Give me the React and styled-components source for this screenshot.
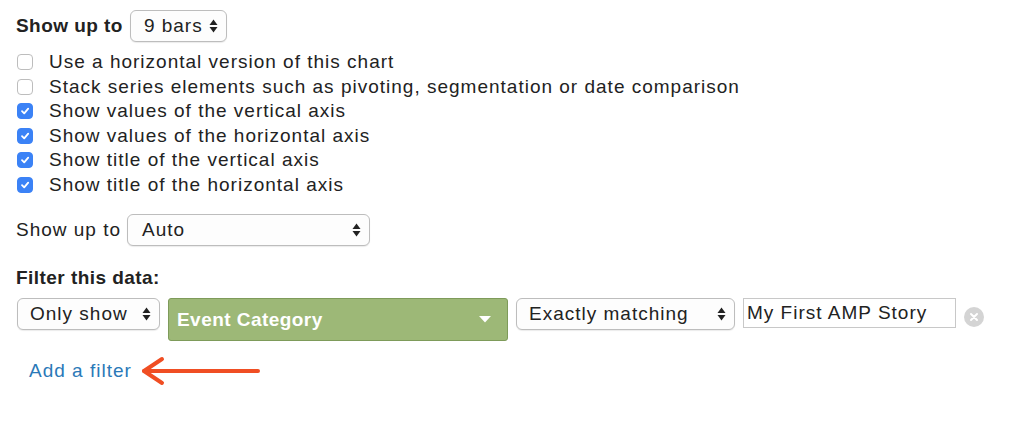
import React from "react";
import styled, { createGlobalStyle } from "styled-components";

const Global = createGlobalStyle`
  html, body { margin: 0; padding: 0; background: #fff; }
  body { font-family: "Liberation Sans", Arial, sans-serif; color: #333; }
`;

const Page = styled.div`
  width: 1024px;
  height: 434px;
  padding: 10px 0 0 16px;
  box-sizing: border-box;
  font-size: 19px;
  letter-spacing: 1px;
`;

const Row = styled.div`
  display: flex;
  align-items: center;
  gap: ${(p) => p.$gap || 8}px;
  margin-top: ${(p) => p.$mt || 0}px;
`;

const Label = styled.span`
  font-weight: ${(p) => (p.$bold ? 700 : 400)};
  letter-spacing: ${(p) => (p.$bold ? "0.45px" : "1px")};
  color: #222;
  white-space: nowrap;
`;

const SelectBox = styled.div`
  box-sizing: border-box;
  display: flex;
  align-items: center;
  justify-content: space-between;
  width: ${(p) => p.$w}px;
  height: ${(p) => p.$h || 32}px;
  padding: 0 8px 0 ${(p) => p.$pl || 14}px;
  border: 1px solid #bdbdbd;
  border-radius: 6px;
  background: #fdfdfd;
  color: #222;
  box-shadow: 0 1px 1px rgba(0,0,0,0.08);
  white-space: nowrap;
`;

const Updown = () => (
  <svg width="9" height="14" viewBox="0 0 9 14">
    <path d="M4.5 0.5 L8.5 6 L0.5 6 Z" fill="#222" />
    <path d="M4.5 13.5 L8.5 8 L0.5 8 Z" fill="#222" />
  </svg>
);

const CheckList = styled.div`
  display: flex;
  flex-direction: column;
  margin-top: 8px;
  padding-left: 1px;
`;

const CheckRow = styled.label`
  display: flex;
  align-items: center;
  gap: 16px;
  height: 24.5px;
  color: #222;
  white-space: nowrap;
`;

const Box = styled.span`
  box-sizing: border-box;
  width: 16px;
  height: 16px;
  border-radius: 4px;
  display: inline-flex;
  align-items: center;
  justify-content: center;
  background: ${(p) => (p.$on ? "#3b82f6" : "#fff")};
  border: 1px solid ${(p) => (p.$on ? "#3b82f6" : "#bdbdbd")};
`;

const Check = ({ on, children }) => (
  <CheckRow>
    <Box $on={on}>
      {on && (
        <svg width="10" height="10" viewBox="0 0 10 10">
          <path d="M2 5.2 L4.2 7.4 L8.2 2.6" stroke="#fff" strokeWidth="1.8" fill="none" strokeLinecap="round" strokeLinejoin="round" />
        </svg>
      )}
    </Box>
    <span>{children}</span>
  </CheckRow>
);

const FilterRow = styled.div`
  display: flex;
  align-items: flex-start;
  margin-top: 9px;
  padding-left: 1px;
`;

const GreenSelect = styled.div`
  box-sizing: border-box;
  display: flex;
  align-items: center;
  justify-content: space-between;
  width: 340px;
  height: 43px;
  margin: 0 8px;
  padding: 0 16px 0 8px;
  background: #9db877;
  border: 1px solid #7e9b5a;
  border-radius: 3px;
  color: #fff;
  font-weight: 700;
  letter-spacing: 0.45px;
`;

const TextInput = styled.div`
  box-sizing: border-box;
  width: 213px;
  height: 30px;
  margin-left: 8px;
  padding: 0 3px;
  border: 1px solid #c8c8c8;
  display: flex;
  align-items: center;
  color: #222;
  white-space: nowrap;
`;

const Clear = styled.span`
  width: 20px;
  height: 20px;
  border-radius: 50%;
  background: #d4d4d4;
  display: inline-flex;
  align-items: center;
  justify-content: center;
  margin: 9px 0 0 8px;
`;

const LinkRow = styled.div`
  display: flex;
  align-items: center;
  margin-top: 14px;
  padding-left: 13px;
  gap: 8px;
`;

const Link = styled.a`
  color: #2a79b8;
  text-decoration: none;
`;

export default function App() {
  return (
    <Page>
      <Global />
      <Row $gap={7}>
        <Label $bold>Show up to</Label>
        <SelectBox $w={97} $pl={13}>
          <span>9 bars</span>
          <Updown />
        </SelectBox>
      </Row>
      <CheckList>
        <Check>Use a horizontal version of this chart</Check>
        <Check>Stack series elements such as pivoting, segmentation or date comparison</Check>
        <Check on>Show values of the vertical axis</Check>
        <Check on>Show values of the horizontal axis</Check>
        <Check on>Show title of the vertical axis</Check>
        <Check on>Show title of the horizontal axis</Check>
      </CheckList>
      <Row $gap={6} $mt={17}>
        <Label>Show up to</Label>
        <SelectBox $w={243}>
          <span>Auto</span>
          <Updown />
        </SelectBox>
      </Row>
      <Row $mt={21}>
        <Label $bold>Filter this data:</Label>
      </Row>
      <FilterRow>
        <SelectBox $w={143} $h={32} $pl={12}>
          <span>Only show</span>
          <Updown />
        </SelectBox>
        <GreenSelect>
          <span>Event Category</span>
          <svg width="12" height="7" viewBox="0 0 12 7">
            <path d="M0 0 L12 0 L6 6.5 Z" fill="#fff" />
          </svg>
        </GreenSelect>
        <SelectBox $w={219} $h={32} $pl={12}>
          <span>Exactly matching</span>
          <Updown />
        </SelectBox>
        <TextInput>My First AMP Story</TextInput>
        <Clear>
          <svg width="10" height="10" viewBox="0 0 10 10">
            <path d="M2 2 L8 8 M8 2 L2 8" stroke="#fff" strokeWidth="2" strokeLinecap="round" />
          </svg>
        </Clear>
      </FilterRow>
      <LinkRow>
        <Link href="#">Add a filter</Link>
        <svg width="122" height="32" viewBox="0 0 122 32">
          <path d="M4 16 L118 16" stroke="#f04e23" strokeWidth="4" strokeLinecap="round" />
          <path d="M22 4 L4 16 L22 28" stroke="#f04e23" strokeWidth="4" fill="none" strokeLinecap="round" strokeLinejoin="round" />
        </svg>
      </LinkRow>
    </Page>
  );
}
